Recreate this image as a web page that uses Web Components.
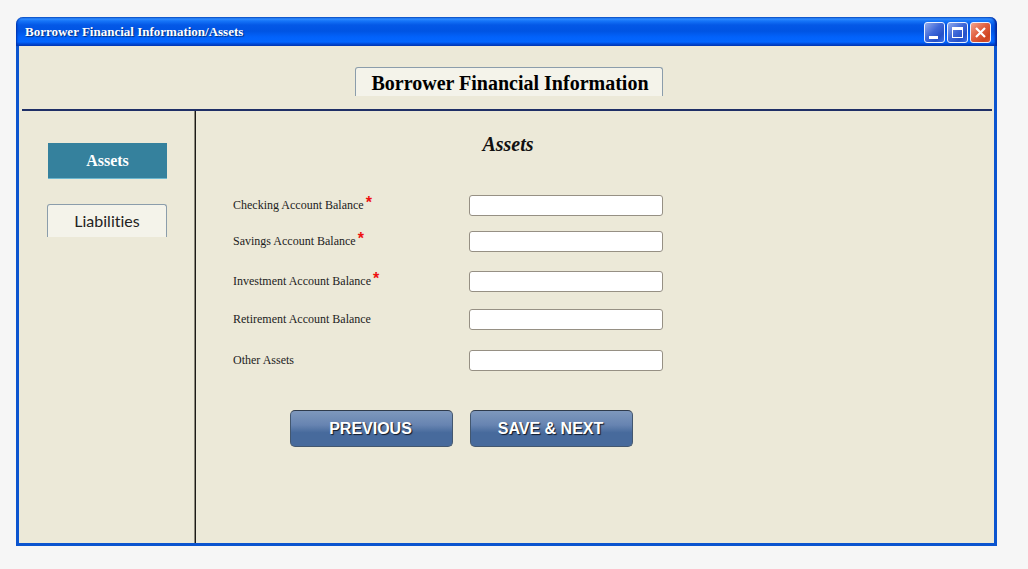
<!DOCTYPE html>
<html lang="en">
<head>
<meta charset="utf-8">
<title>Borrower Financial Information/Assets</title>
<style>
  body { margin: 0; background: #f6f6f6; color: #111; font-family: "Liberation Serif", serif; }
</style>
</head>
<body>
<app-window heading="Borrower Financial Information/Assets">
  <page-header>Borrower Financial Information</page-header>
  <page-layout>
    <nav-item slot="side" active>Assets</nav-item>
    <nav-item slot="side">Liabilities</nav-item>
    <asset-form heading="Assets">
      <money-field label="Checking Account Balance" required></money-field>
      <money-field label="Savings Account Balance" required></money-field>
      <money-field label="Investment Account Balance" required></money-field>
      <money-field label="Retirement Account Balance"></money-field>
      <money-field label="Other Assets"></money-field>
      <action-button slot="actions">PREVIOUS</action-button>
      <action-button slot="actions">SAVE &amp; NEXT</action-button>
    </asset-form>
  </page-layout>
</app-window>

<script>
class Base extends HTMLElement {
  constructor() {
    super();
    this.attachShadow({ mode: "open" });
  }
  connectedCallback() {
    this.shadowRoot.innerHTML =
      `<style>*{box-sizing:border-box}:host{box-sizing:border-box}${this.css()}</style>${this.html()}`;
  }
  attr(name) { return this.getAttribute(name) || ""; }
}

customElements.define("app-window", class extends Base {
  css() { return `
    :host { display: flex; min-height: 100vh; padding: 17px 31px 23px 16px; }
    .window { flex: 1; display: flex; flex-direction: column; min-width: 0; }
    .bar { display: flex; align-items: center; height: 29px; padding: 1px 6px 0 9px;
      border-radius: 7px 7px 0 0;
      background: linear-gradient(#0a50c4 0, #2f8bff 2px, #1574f8 4px, #0458e6 8px, #0054e3 14px, #0262fb 20px, #0366ff 25px, #0048d4 27px, #0038b4 29px);
      box-shadow: inset 2px 0 2px -1px #0030a8, inset -3px 0 2px -1px #0028a0; }
    h1 { flex: 1; margin: 0; font-size: 13px; line-height: 16px; color: #fff; text-shadow: 1px 1px 1px #003080; }
    .controls { display: flex; gap: 2px; }
    .body { flex: 1; display: flex; flex-direction: column; border: solid #0b54cf; border-width: 0 3px 3px; background: #ece9d8; }`; }
  html() { return `
    <div class="window">
      <header class="bar"><h1>${this.attr("heading")}</h1>
        <div class="controls">
          <window-control kind="minimize"></window-control>
          <window-control kind="maximize"></window-control>
          <window-control kind="close"></window-control>
        </div>
      </header>
      <div class="body"><slot></slot></div>
    </div>`; }
});

customElements.define("window-control", class extends Base {
  css() { return `
    :host { display: block; }
    button { display: block; width: 21px; height: 21px; padding: 0; border: 1px solid #e9f1ff; border-radius: 3px;
      background: linear-gradient(135deg, #92abec, #3f68d8 45%, #2450c8 75%, #3c70e8); }
    :host([kind="close"]) button { background: linear-gradient(135deg, #f0a48c, #e16040 45%, #cf4420 80%, #d8583a); }
    svg { display: block; }`; }
  html() {
    const glyph = {
      minimize: '<path d="M4 13h9v3H4z" fill="#fff"/>',
      maximize: '<path d="M4 4h11v11H4zM5 7v7h9V7z" fill="#fff" fill-rule="evenodd"/>',
      close: '<path d="M5 5l9 9M14 5l-9 9" stroke="#fff" stroke-width="2.2" fill="none"/>'
    };
    const kind = this.attr("kind");
    return `<button type="button" aria-label="${kind}"><svg width="19" height="19" viewBox="0 0 19 19">${glyph[kind]}</svg></button>`;
  }
});

customElements.define("page-header", class extends Base {
  css() { return `
    :host { display: block; margin: 0 2px 0 3px; padding: 21px 0 13px 333px; border-bottom: 2px solid #1f2f66; }
    h2 { width: 308px; margin: 0; padding: 3px 0 1px 2px; border: 1px solid #8b9dab; border-bottom: 0; border-radius: 3px 3px 0 0;
      background: #f4f3ea; color: #000; font-size: 20px; line-height: 24px; text-align: center; }`; }
  html() { return `<h2><slot></slot></h2>`; }
});

customElements.define("page-layout", class extends Base {
  css() { return `
    :host { flex: 1; display: flex; }
    nav { flex: none; display: flex; flex-direction: column; gap: 25px; width: 177px; padding: 32px 27px 32px 28px; border-right: 1px solid #1c1b18;
      box-shadow: inset -1px 0 #8c897c; }
    main { flex: 1; min-width: 0; }`; }
  html() { return `<nav><slot name="side"></slot></nav><main><slot></slot></main>`; }
});

customElements.define("nav-item", class extends Base {
  css() { return `
    :host { display: block; width: 120px; }
    a { display: block; height: 33px; border: 1px solid #8b9dab; border-bottom: 0; border-radius: 3px 3px 0 0;
      background: #f4f3ea; color: #222; font: 16px/32px Lato, sans-serif; font-variant-ligatures: none; text-align: center; text-decoration: none; }
    :host([active]) a { height: 36px; margin-left: 1px; border: 0; border-bottom: 1px solid #6db8d0; border-radius: 0;
      background: #35819d; color: #fff; font: bold 16px/36px "Liberation Serif", serif; }`; }
  html() { return `<a href="#"><slot></slot></a>`; }
});

customElements.define("asset-form", class extends Base {
  css() { return `
    :host { display: block; padding: 22px 24px 24px 37px; }
    h3 { width: 550px; margin: 0 0 39px; font-size: 20px; line-height: 22px; font-style: italic; text-align: center; }
    .fields { display: grid; grid-template-rows: 36px 40px 38px 41px 21px; align-items: start; }
    .actions { display: flex; gap: 17px; padding: 40px 0 0 57px; }`; }
  html() { return `
    <form>
      <h3>${this.attr("heading")}</h3>
      <div class="fields"><slot></slot></div>
      <div class="actions"><slot name="actions"></slot></div>
    </form>`; }
});

customElements.define("money-field", class extends Base {
  css() { return `
    :host { display: grid; grid-template-columns: 236px 194px; align-items: center; }
    label { display: flex; gap: 2px; font-size: 12px; line-height: 22px; color: #1c1c1c; }
    b { color: #e11; font: bold 16px/18px "Liberation Sans", sans-serif; }
    input { width: 100%; height: 21px; padding: 0 4px; border: 1px solid #969084; border-radius: 3px; background: #fff; font: 12px "Liberation Serif", serif; }`; }
  html() {
    const star = this.hasAttribute("required") ? "<b>*</b>" : "";
    return `<label for="value">${this.attr("label")}${star}</label><input id="value" type="text" inputmode="decimal">`;
  }
});

customElements.define("action-button", class extends Base {
  css() { return `
    :host { display: block; }
    button { display: block; width: 163px; height: 37px; padding: 0 2px 0 0; border: 1px solid #43576f; border-top-color: #2f3b4c; border-radius: 5px;
      background: linear-gradient(#7e98bd, #6784b1 40%, #476a9c 62%, #476a9c);
      color: #fff; font: bold 16px/35px "Liberation Sans", sans-serif; text-shadow: 1px 1px 1px #101828; }`; }
  html() { return `<button type="button"><slot></slot></button>`; }
});
</script>
</body>
</html>
